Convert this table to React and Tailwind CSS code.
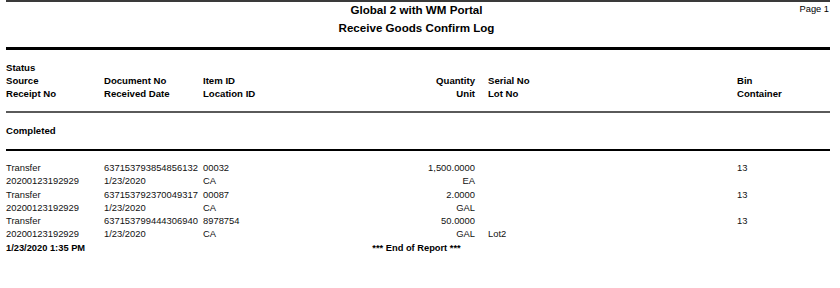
import React from "react";

const rows = [
  { source: "Transfer", doc: "637153793854856132", item: "00032", qty: "1,500.0000", bin: "13", receipt: "20200123192929", date: "1/23/2020", loc: "CA", unit: "EA", lot: "" },
  { source: "Transfer", doc: "637153792370049317", item: "00087", qty: "2.0000", bin: "13", receipt: "20200123192929", date: "1/23/2020", loc: "CA", unit: "GAL", lot: "" },
  { source: "Transfer", doc: "637153799444306940", item: "8978754", qty: "50.0000", bin: "13", receipt: "20200123192929", date: "1/23/2020", loc: "CA", unit: "GAL", lot: "Lot2" },
];

const cols = "grid grid-cols-[98px_99px_100px_172px_262px_1fr]";

function Line({ a, b, c, d, e, f, className = "" }) {
  return (
    <div className={`${cols} ${className}`}>
      <div className="whitespace-nowrap">{a}</div>
      <div className="whitespace-nowrap">{b}</div>
      <div className="whitespace-nowrap">{c}</div>
      <div className="whitespace-nowrap text-right">{d}</div>
      <div className="whitespace-nowrap pl-[13px]">{e}</div>
      <div className="whitespace-nowrap">{f}</div>
    </div>
  );
}

export default function App() {
  return (
    <div className="w-[840px] h-[288px] bg-white text-black font-['Liberation_Sans',Arial,sans-serif] overflow-hidden">
      <div className="ml-[6px] w-[824px]">
        <div className="h-[2px] bg-[#3a3a3a]" />
        <div className="h-[45px] grid grid-cols-[1fr_auto_1fr]">
          <div />
          <div className="pr-[3px] -mt-px text-center font-bold text-[11.6px] leading-[18px]">
            <p>Global 2 with WM Portal</p>
            <p>Receive Goods Confirm Log</p>
          </div>
          <div className="pt-px pr-px text-right text-[9.3px] leading-[13px]">Page 1</div>
        </div>
        <div className="h-[3px] bg-black" />

        <div className="pt-[11px] pb-[11px] font-bold text-[9.6px] leading-[13px]">
          <Line a="Status" />
          <Line a="Source" b="Document No" c="Item ID" d="Quantity" e="Serial No" f="Bin" />
          <Line a="Receipt No" b="Received Date" c="Location ID" d="Unit" e="Lot No" f="Container" />
        </div>
        <div className="h-[2px] bg-[#5a5a5a]" />

        <div className="pt-[11px] pb-[11.5px] font-bold text-[9.6px] leading-[13px]">Completed</div>
        <div className="h-[2px] bg-black" />

        <div className="pt-[10.5px] text-[9.4px] leading-[13.3px] text-[#111]">
          {rows.map((r, i) => (
            <div key={i}>
              <Line a={r.source} b={r.doc} c={r.item} d={r.qty} f={r.bin} />
              <Line a={r.receipt} b={r.date} c={r.loc} d={r.unit} e={r.lot} />
            </div>
          ))}
        </div>

        <div className="mt-[1.5px] grid grid-cols-[1fr_auto_1fr] font-bold text-[9.3px] leading-[13px]">
          <div className="whitespace-nowrap">1/23/2020 1:35 PM</div>
          <div className="pr-[3px] whitespace-nowrap">*** End of Report ***</div>
          <div />
        </div>
      </div>
    </div>
  );
}
